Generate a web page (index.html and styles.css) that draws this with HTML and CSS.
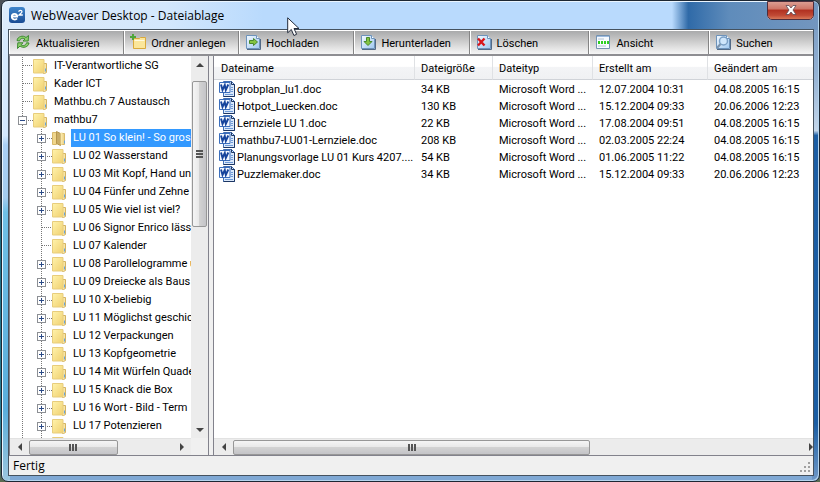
FILE: index.html
```html
<!DOCTYPE html>
<html lang="de">
<head>
    <meta charset="UTF-8">
    <meta name="viewport" content="width=device-width, initial-scale=1.0">
    <title>WebWeaver Desktop - Dateiablage</title>
    <link rel="stylesheet" href="styles.css">
</head>
<body>
    <svg class="sprite" aria-hidden="true">
        <defs>
            <linearGradient id="folderFill" x1="0" y1="0" x2="1" y2="1">
                <stop offset="0" stop-color="#fff3ac"/>
                <stop offset="1" stop-color="#f0d070"/>
            </linearGradient>
            <linearGradient id="pageFill" x1="0" y1="0" x2="1" y2="1">
                <stop offset="0" stop-color="#f4faff"/>
                <stop offset="1" stop-color="#9fc8f0"/>
            </linearGradient>
            <linearGradient id="logoFill" x1="0" y1="0" x2="0" y2="1">
                <stop offset="0" stop-color="#3f86cc"/>
                <stop offset="1" stop-color="#1a4c94"/>
            </linearGradient>
        </defs>
        <symbol id="folder" viewBox="0 0 15 15">
            <path d="M10.500 4.500h3v9l-2 1h-1z" fill="#f8e5a4" stroke="#d3b363"/>
            <path d="M.5.5h10.500v12.500l-1 1H.5z" fill="url(#folderFill)" stroke="#e8cd7c"/>
            <path d="M12 9.500h1v3h-1z" fill="#69a5dc"/>
        </symbol>
        <symbol id="folderOpen" viewBox="0 0 15 15">
            <path d="M.5 1.500h4v12h-4zM9.500 2.500h3v11h-3z" fill="#f0d68c" stroke="#d8b96a"/>
            <path d="M4.500.5l4 2v12l-4-2z" fill="#c9ac66" stroke="#b6964c"/>
            <path d="M8.500 1.500h2v12h-2z" fill="#f8e7a8"/>
            <path d="M12 9.500h1v3h-1z" fill="#69a5dc"/>
        </symbol>
        <symbol id="page" viewBox="0 0 16 16">
            <path d="M1.500 1.500h10l3 3v10h-13z" fill="url(#pageFill)" stroke="#6d93bb"/>
            <path d="M11.500 1.500v3h3" fill="#fff" stroke="#6d93bb"/>
            <path d="M2 15.500h13.500V5" fill="none" stroke="#526a86"/>
        </symbol>
        <symbol id="word" viewBox="0 0 16 16">
            <path d="M4.500.5h8l3 3v12h-11z" fill="#dbe9fb" stroke="#3f6db4"/>
            <path d="M12.500.5v3h3v12h-11" fill="none" stroke="#1d3663"/>
            <path d="M12 6.500h2M12 8.500h2M12 10.500h2M6 13.500h8" stroke="#6f9bd8"/>
            <path d="M.5 1.500h10.500v10H.5z" fill="#f4f8ff" stroke="#3c6fbd"/>
            <path d="M2 3.500l1.500 5.500 2.300-5 1 5L9.300 3.500" fill="none" stroke="#16449c" stroke-width="1.900"/>
        </symbol>
    </svg>

    <div class="window">
        <header class="titlebar">
            <svg class="logo" viewBox="0 0 16 16" aria-hidden="true">
                <rect width="16" height="16" rx="3" fill="url(#logoFill)"/>
                <path d="M2.800 9.500h5.400c0-3.600-5.400-3.600-5.400 0 0 3.600 4 3.600 5.200 2" fill="none" stroke="#fff" stroke-width="1.800"/>
                <path d="M9.800 4.800c0-2 3.200-2 3.200 0 0 1.200-2.200 2-3 3.200h3.800" fill="none" stroke="#fff" stroke-width="1.300"/>
            </svg>
            <h1>WebWeaver Desktop - Dateiablage</h1>
            <button class="close" type="button" aria-label="Schließen">
                <svg viewBox="0 0 12 10"><path d="M1 .5h3l2 2.500 2-2.500h3L8 5l3 4.500H8L6 7 4 9.500H1L4 5z" fill="#fff" stroke="#5b4a55" stroke-width=".8"/></svg>
            </button>
        </header>

        <main class="client">
            <nav class="toolbar">
                <button type="button">
                    <svg viewBox="0 0 16 16">
                        <path d="M2 6.500C2.500 2.500 8 .8 11 3.500L13.500 1.500 13.200 7H8l2-2C7.500 3.500 5 4.500 4.500 7z" fill="#8ed06c" stroke="#3c8a31"/>
                        <path d="M14 9c-.5 4-6 5.700-9 3L2.500 14.500 2.800 8.800H8l-2 2c2.500 1.500 5 .5 5.500-2z" fill="#8ed06c" stroke="#3c8a31"/>
                    </svg>
                    Aktualisieren
                </button>
                <button type="button">
                    <svg viewBox="0 0 16 16">
                        <path d="M3.500 4.500h6l1-1h5v11h-12z" fill="#fbe69a" stroke="#d9a93c"/>
                        <path d="M4.500 6.500h10" stroke="#fffbe0"/>
                        <path d="M3 0v6M0 3h6" stroke="#4fa63a" stroke-width="2"/>
                    </svg>
                    Ordner anlegen
                </button>
                <button type="button">
                    <svg viewBox="0 0 16 16">
                        <use href="#page"/>
                        <path d="M4.500 6.500h4v-2l4 3.500-4 3.500v-2h-4z" fill="#84c441" stroke="#4a8a2c"/>
                    </svg>
                    Hochladen
                </button>
                <button type="button">
                    <svg viewBox="0 0 16 16">
                        <use href="#page"/>
                        <path d="M6.500 3.500h3v4h2.500L8 11.500 4 7.500h2.500z" fill="#84c441" stroke="#4a8a2c"/>
                    </svg>
                    Herunterladen
                </button>
                <button class="wide" type="button">
                    <svg viewBox="0 0 16 16">
                        <use href="#page"/>
                        <path d="M2 4.500l6.500 7M8.500 4.500l-6.500 7" stroke="#d8161b" stroke-width="2.400"/>
                    </svg>
                    Löschen
                </button>
                <button class="wide" type="button">
                    <svg viewBox="0 0 16 16">
                        <path d="M1.500 1.500h13v13h-13z" fill="#f7fbff" stroke="#7592b0"/>
                        <path d="M2 2.500h12" stroke="#9dbbe0"/>
                        <path d="M3 5h6M3 12h8" stroke="#b4c4d4"/>
                        <path d="M3 8.500h11" stroke="#2fd01f" stroke-width="3" stroke-dasharray="2 1"/>
                    </svg>
                    Ansicht
                </button>
                <button class="rest" type="button">
                    <svg viewBox="0 0 16 16">
                        <use href="#page"/>
                        <circle cx="8.500" cy="7" r="4" fill="#cfe6fb" stroke="#7ba0c6" stroke-width="1.500"/>
                        <path d="M5.500 10L2 14" stroke="#7b93ad" stroke-width="2"/>
                    </svg>
                    Suchen
                </button>
            </nav>

            <div class="panels">
                <aside class="tree-panel">
                    <div class="tree-view">
                        <ul class="tree">
                            <li><div class="node"><i class="twig leaf"></i><svg><use href="#folder"/></svg><span>IT-Verantwortliche SG</span></div></li>
                            <li><div class="node"><i class="twig leaf"></i><svg><use href="#folder"/></svg><span>Kader ICT</span></div></li>
                            <li><div class="node"><i class="twig leaf"></i><svg><use href="#folder"/></svg><span>Mathbu.ch 7 Austausch</span></div></li>
                            <li>
                                <div class="node"><button class="twig minus" type="button" aria-label="Zuklappen"></button><svg><use href="#folder"/></svg><span>mathbu7</span></div>
                                <ul>
                                    <li><div class="node selected"><button class="twig plus" type="button" aria-label="Aufklappen"></button><svg><use href="#folderOpen"/></svg><span>LU 01 So klein! - So gros</span></div></li>
                                    <li><div class="node"><button class="twig plus" type="button" aria-label="Aufklappen"></button><svg><use href="#folder"/></svg><span>LU 02 Wasserstand</span></div></li>
                                    <li><div class="node"><button class="twig plus" type="button" aria-label="Aufklappen"></button><svg><use href="#folder"/></svg><span>LU 03 Mit Kopf, Hand un</span></div></li>
                                    <li><div class="node"><button class="twig plus" type="button" aria-label="Aufklappen"></button><svg><use href="#folder"/></svg><span>LU 04 Fünfer und Zehne</span></div></li>
                                    <li><div class="node"><button class="twig plus" type="button" aria-label="Aufklappen"></button><svg><use href="#folder"/></svg><span>LU 05 Wie viel ist viel?</span></div></li>
                                    <li><div class="node"><i class="twig leaf"></i><svg><use href="#folder"/></svg><span>LU 06 Signor Enrico lässt</span></div></li>
                                    <li><div class="node"><i class="twig leaf"></i><svg><use href="#folder"/></svg><span>LU 07 Kalender</span></div></li>
                                    <li><div class="node"><button class="twig plus" type="button" aria-label="Aufklappen"></button><svg><use href="#folder"/></svg><span>LU 08 Parollelogramme u</span></div></li>
                                    <li><div class="node"><button class="twig plus" type="button" aria-label="Aufklappen"></button><svg><use href="#folder"/></svg><span>LU 09 Dreiecke als Baus</span></div></li>
                                    <li><div class="node"><button class="twig plus" type="button" aria-label="Aufklappen"></button><svg><use href="#folder"/></svg><span>LU 10 X-beliebig</span></div></li>
                                    <li><div class="node"><button class="twig plus" type="button" aria-label="Aufklappen"></button><svg><use href="#folder"/></svg><span>LU 11 Möglichst geschic</span></div></li>
                                    <li><div class="node"><button class="twig plus" type="button" aria-label="Aufklappen"></button><svg><use href="#folder"/></svg><span>LU 12 Verpackungen</span></div></li>
                                    <li><div class="node"><button class="twig plus" type="button" aria-label="Aufklappen"></button><svg><use href="#folder"/></svg><span>LU 13 Kopfgeometrie</span></div></li>
                                    <li><div class="node"><button class="twig plus" type="button" aria-label="Aufklappen"></button><svg><use href="#folder"/></svg><span>LU 14 Mit Würfeln Quade</span></div></li>
                                    <li><div class="node"><button class="twig plus" type="button" aria-label="Aufklappen"></button><svg><use href="#folder"/></svg><span>LU 15 Knack die Box</span></div></li>
                                    <li><div class="node"><button class="twig plus" type="button" aria-label="Aufklappen"></button><svg><use href="#folder"/></svg><span>LU 16 Wort - Bild - Term</span></div></li>
                                    <li><div class="node"><button class="twig plus" type="button" aria-label="Aufklappen"></button><svg><use href="#folder"/></svg><span>LU 17 Potenzieren</span></div></li>
                                    <li><div class="node"><i class="twig leaf"></i><svg><use href="#folder"/></svg></div></li>
                                </ul>
                            </li>
                        </ul>
                    </div>
                    <div class="scroll vertical">
                        <i class="arrow up"></i>
                        <div class="track"><div class="thumb"></div></div>
                        <i class="arrow down"></i>
                    </div>
                    <div class="scroll horizontal">
                        <i class="arrow left"></i>
                        <div class="track"><div class="thumb"></div></div>
                        <i class="arrow right"></i>
                    </div>
                    <div class="corner"></div>
                </aside>

                <section class="list-panel">
                    <div class="list-view">
                        <table>
                            <colgroup>
                                <col class="col-name">
                                <col class="col-size">
                                <col class="col-type">
                                <col class="col-created">
                                <col>
                            </colgroup>
                            <thead>
                                <tr><th>Dateiname</th><th>Dateigröße</th><th>Dateityp</th><th>Erstellt am</th><th>Geändert am</th></tr>
                            </thead>
                            <tbody>
                                <tr><td><svg><use href="#word"/></svg>grobplan_lu1.doc</td><td>34 KB</td><td>Microsoft Word ...</td><td>12.07.2004 10:31</td><td>04.08.2005 16:15</td></tr>
                                <tr><td><svg><use href="#word"/></svg>Hotpot_Luecken.doc</td><td>130 KB</td><td>Microsoft Word ...</td><td>15.12.2004 09:33</td><td>20.06.2006 12:23</td></tr>
                                <tr><td><svg><use href="#word"/></svg>Lernziele LU 1.doc</td><td>22 KB</td><td>Microsoft Word ...</td><td>17.08.2004 09:51</td><td>04.08.2005 16:15</td></tr>
                                <tr><td><svg><use href="#word"/></svg>mathbu7-LU01-Lernziele.doc</td><td>208 KB</td><td>Microsoft Word ...</td><td>02.03.2005 22:24</td><td>04.08.2005 16:15</td></tr>
                                <tr><td><svg><use href="#word"/></svg>Planungsvorlage LU 01 Kurs 4207....</td><td>54 KB</td><td>Microsoft Word ...</td><td>01.06.2005 11:22</td><td>04.08.2005 16:15</td></tr>
                                <tr><td><svg><use href="#word"/></svg>Puzzlemaker.doc</td><td>34 KB</td><td>Microsoft Word ...</td><td>15.12.2004 09:33</td><td>20.06.2006 12:23</td></tr>
                            </tbody>
                        </table>
                    </div>
                    <div class="scroll horizontal">
                        <i class="arrow left"></i>
                        <div class="track"><div class="thumb"></div></div>
                        <i class="arrow right"></i>
                    </div>
                </section>
            </div>

            <footer class="statusbar">
                <span>Fertig</span>
                <svg viewBox="0 0 11 11" aria-hidden="true"><path d="M8 0h2v2H8zM4 4h2v2H4zM8 4h2v2H8zM0 8h2v2H0zM4 8h2v2H4zM8 8h2v2H8z" fill="#a0a0a0"/></svg>
            </footer>
        </main>
    </div>

    <svg class="cursor" viewBox="0 0 13 20" aria-hidden="true">
        <path d="M.7.8v15l3.600-3.300 2.600 6 2.700-1.200-2.600-5.800h5z" fill="#fff" stroke="#222a3a"/>
    </svg>
</body>
</html>
```

FILE: styles.css
```css
*{
    margin: 0px;
    padding: 0px;
    box-sizing: border-box;
}
body{
    height: 100vh;
    padding-left: 1px;
    background: linear-gradient(#4c5157 0, #3a3f45 40%, #1d6f86 50%, #2b7f96 90%, #5a6a50 100%);
    font-family: Roboto, "Liberation Sans", Arial, sans-serif;
    font-size: 11px;
    color: #000;
    overflow: hidden;
}
button{
    border: none;
    font: inherit;
    color: inherit;
}
.sprite{
    position: absolute;
    width: 0px;
    height: 0px;
}

/* window frame */
.window{
    height: 100%;
    display: flex;
    flex-direction: column;
    padding: 0px 5px 5px 6px;
    border: 1px solid #1d2733;
    border-radius: 7px;
    box-shadow: inset 1px 1px 0px #eaf5ff, inset -1px -1px 0px #b5d5ee;
    background:
        linear-gradient(90deg, #dcebfb 0, #d3e7fc 20%, #b9dafd 32%, #b9dafd 82%, #2f6aa8 84%, #5f8cbb 89%, #7396bf 100%) top / 100% 29px no-repeat,
        linear-gradient(#7295be 0, #93b1d3 15%, #c3d6ea 27%, #1c5ea4 28%, #1a5da3 88%, #6f98c6 100%) right / 7px 100% no-repeat,
        linear-gradient(#d9eafc 0, #d3e7fc 28%, #a9cff5 30%, #a4cbee 41%, #6fc0e6 44%, #5aaedc 85%, #9bc6dd 100%) left / 8px 100% no-repeat,
        #7fa8d4;
}
.titlebar{
    flex: 0 0 28px;
    display: flex;
    align-items: center;
}
.logo{
    width: 16px;
    height: 16px;
    margin-left: 1px;
}
.titlebar h1{
    flex: 1;
    margin-left: 6px;
    font-family: "Open Sans", "Segoe UI", sans-serif;
    font-size: 12px;
    font-weight: normal;
}
.close{
    align-self: flex-start;
    display: flex;
    align-items: center;
    justify-content: center;
    width: 47px;
    height: 19px;
    border: 1px solid #e3d3d8;
    border-top: none;
    border-radius: 0px 0px 5px 5px;
    outline: 1px solid #4d2d3c;
    outline-offset: -1px;
    background: linear-gradient(#dda398 0, #cd7466 45%, #b03020 50%, #c04a35 80%, #d87858 100%);
}
.close svg{
    width: 12px;
    height: 10px;
}
.client{
    flex: 1;
    min-height: 0px;
    display: flex;
    flex-direction: column;
    border: 1px solid #45525f;
    background-color: #f0f0f0;
}

/* toolbar */
.toolbar{
    flex: 0 0 26px;
    display: flex;
    border-top: 1px solid #fff;
    border-bottom: 2px solid #8e8e92;
    background-color: #ddd;
}
.toolbar button{
    flex: 115;
    min-width: 0px;
    display: flex;
    align-items: center;
    gap: 5px;
    padding: 2px 0px 0px 5px;
    border-left: 1px solid #fff;
    border-right: 1px solid #858585;
    background: linear-gradient(#a9aaab 0, #c4c4c4 35%, #e4e4e4 75%, #f5f5f5 100%);
    white-space: nowrap;
}
.toolbar .wide{
    flex: 120;
}
.toolbar .rest{
    flex: 104;
    border-right: none;
}
.toolbar svg{
    flex: none;
    width: 16px;
    height: 16px;
    margin-top: -3px;
}

/* panels */
.panels{
    flex: 1;
    min-height: 0px;
    display: flex;
    gap: 4px;
    border-bottom: 1px solid #82828c;
}
.tree-panel{
    flex: 0 0 200px;
    display: grid;
    grid-template-columns: 1fr 17px;
    grid-template-rows: 1fr 17px;
    border-left: 1px solid #82828c;
    border-right: 1px solid #82828c;
    background-color: #fff;
}
.tree-view{
    min-width: 0px;
    min-height: 0px;
    padding-top: 1px;
    overflow: hidden;
}
.tree, .tree ul{
    list-style: none;
    background: repeating-linear-gradient(#777 0 1px, transparent 1px 2px) 12px 0px / 1px 100% no-repeat;
}
.tree ul{
    background-position: 31px 0px;
}
.node{
    display: flex;
    align-items: center;
    height: 18px;
    padding-left: 8px;
    white-space: nowrap;
}
.tree ul .node{
    padding-left: 27px;
}
.node svg{
    flex: none;
    width: 15px;
    height: 15px;
    margin: 0px 4px 0px 6px;
}
.node span{
    flex: 1;
    padding: 0px 2px;
    line-height: 18px;
}
.selected span{
    background-color: #3399ff;
    color: #fff;
}
.twig{
    position: relative;
    flex: none;
    width: 9px;
    height: 9px;
}
.twig::after{
    content: "";
    position: absolute;
    top: 3px;
    left: 9px;
    width: 5px;
    height: 1px;
    background: repeating-linear-gradient(90deg, #777 0 1px, transparent 1px 2px);
}
.leaf::after{
    left: 5px;
    width: 9px;
}
.plus, .minus{
    border: 1px solid #8c8f94;
    background:
        linear-gradient(#2b4a86, #2b4a86) center / 5px 1px no-repeat,
        #fff;
}
.plus{
    background:
        linear-gradient(#2b4a86, #2b4a86) center / 5px 1px no-repeat,
        linear-gradient(#2b4a86, #2b4a86) center / 1px 5px no-repeat,
        #fff;
}

/* file list */
.list-panel{
    flex: 1;
    min-width: 0px;
    display: flex;
    flex-direction: column;
    border-left: 1px solid #82828c;
    background-color: #fff;
}
.list-view{
    flex: 1;
    min-height: 0px;
    overflow: hidden;
}
table{
    width: 100%;
    table-layout: fixed;
    border-collapse: separate;
    border-spacing: 0px;
}
.col-name{
    width: 201px;
}
.col-size{
    width: 78px;
}
.col-type{
    width: 100px;
}
.col-created{
    width: 115px;
}
th{
    height: 24px;
    padding-top: 2px;
    padding-left: 6px;
    border-right: 1px solid #dfe1e4;
    border-bottom: 1px solid #d0d3d8;
    background: linear-gradient(#fff 0, #fff 45%, #f3f4f6 50%, #f0f1f3 100%);
    font-weight: normal;
    text-align: left;
}
th:last-child{
    border-right: none;
}
td{
    height: 17px;
    padding-left: 6px;
    line-height: 17px;
    white-space: nowrap;
}
th:first-child{
    padding-left: 7px;
}
td:first-child{
    padding-left: 5px;
}
td svg{
    width: 16px;
    height: 16px;
    margin-right: 2px;
    vertical-align: top;
}
tbody tr:first-child td{
    border-top: 1px solid #fff;
    height: 18px;
}

/* scrollbars */
.scroll{
    display: flex;
    background-color: #ececec;
}
.horizontal{
    height: 17px;
    border-top: 1px solid #e2e2e2;
    align-items: center;
}
.vertical{
    flex-direction: column;
    align-items: center;
}
.track{
    flex: 1;
}
.thumb{
    border: 1px solid #979797;
    border-radius: 2px;
}
.horizontal .thumb{
    width: 62%;
    height: 15px;
    background:
        repeating-linear-gradient(90deg, #555 0 2px, transparent 2px 3px) center / 8px 7px no-repeat,
        linear-gradient(#f5f5f5 0, #e8e8e8 48%, #d2d2d2 50%, #c4c4c8 100%);
}
.vertical .thumb{
    width: 15px;
    height: 42%;
    margin-top: 8px;
    background:
        repeating-linear-gradient(#555 0 2px, transparent 2px 3px) center / 7px 8px no-repeat,
        linear-gradient(90deg, #f5f5f5 0, #e8e8e8 48%, #d2d2d2 50%, #c4c4c8 100%);
}
.arrow{
    flex: 0 0 19px;
    display: flex;
    align-items: center;
    justify-content: center;
}
.vertical .arrow{
    flex-basis: 17px;
}
.arrow::before{
    content: "";
    border: 4px solid transparent;
}
.left::before{
    border-right-color: #444;
    border-left: none;
}
.right::before{
    border-left-color: #444;
    border-right: none;
}
.up::before{
    border-bottom-color: #444;
    border-top: none;
}
.down::before{
    border-top-color: #444;
    border-bottom: none;
}
.list-panel .right{
    flex-basis: 4px;
}
.corner{
    background-color: #f0f0f0;
}

/* status bar */
.statusbar{
    flex: 0 0 19px;
    display: flex;
    justify-content: space-between;
    align-items: center;
    padding: 0px 2px 0px 4px;
    font-family: "Open Sans", "Segoe UI", sans-serif;
    font-size: 12px;
    line-height: 18px;
}
.statusbar svg{
    align-self: flex-end;
    width: 11px;
    height: 11px;
    margin-bottom: 2px;
}

.cursor{
    position: absolute;
    left: 287px;
    top: 17px;
    width: 13px;
    height: 20px;
}
```
